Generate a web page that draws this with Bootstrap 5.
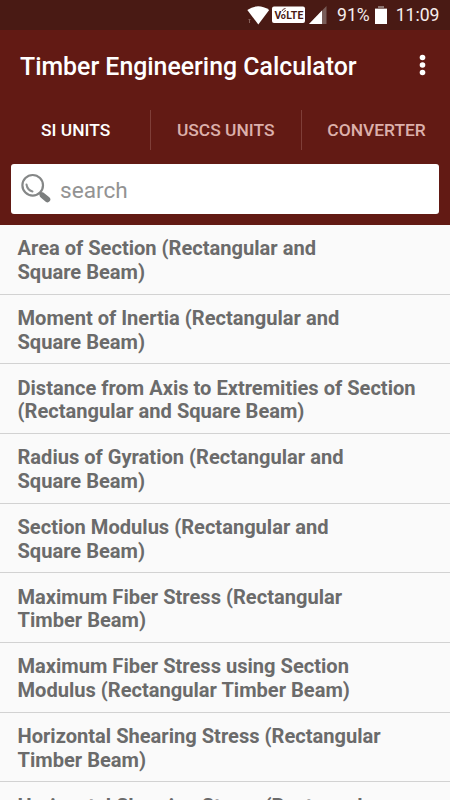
<!DOCTYPE html>
<html lang="en">
<head>
<meta charset="utf-8">
<meta name="viewport" content="width=device-width, initial-scale=1">
<title>Timber Engineering Calculator</title>
<link href="https://cdn.jsdelivr.net/npm/bootstrap@5.3.0/dist/css/bootstrap.min.css" rel="stylesheet">
<style>
body{font-family:Roboto,"Liberation Sans",sans-serif;background:#fafafa}
.screen{height:800px}
.statusbar{height:30px;background:#491a14;padding-right:10.5px;color:#f6eeed;font-size:17.6px;line-height:32px}
.statusbar svg{display:block}
.signals{margin-right:1px}
.battery{margin:0 6px 0 0}
.app-head{height:195px;background:#621a14;color:#fff}
.titlebar{height:72px;padding:0 18px 0 20px}
.titlebar h1{font-size:24.85px;font-weight:500;line-height:30px;white-space:nowrap;padding-top:1px}
.unit-tabs{height:57px;padding:8px 0 9px;margin-right:-2px}
.unit-tabs .nav-link{height:40px;font-size:17.4px;font-weight:500;color:#dcb0ab;padding:1px 1px 0 0;white-space:nowrap;border-radius:0}
.unit-tabs .nav-link.active{color:#fff;padding-left:2px}
.unit-tabs .nav-item+.nav-item{border-left:1px solid #7f3e38}
.searchbox{margin:5px 11px 0;height:50px;background:#fff;border-radius:3px;padding-left:9px}
.searchbox input{font-size:22.6px;color:#888;line-height:30px}
.searchbox .form-control{padding-top:3px!important}
.searchbox input::placeholder{color:#939393;opacity:1}
.formulas{flex:1 1 0;min-height:0}
.formulas .list-group-item{height:69.68px;flex:none;padding:12.3px 17.5px 0;background:#fafafa;color:#6b6b6b;border-color:#d2d2d2;font-size:20.08px;font-weight:700;line-height:23.8px;white-space:nowrap}
</style>
<script src="https://cdn.jsdelivr.net/npm/bootstrap@5.3.0/dist/js/bootstrap.bundle.min.js"></script>
</head>
<body>
<div class="screen d-flex flex-column overflow-hidden">
  <div class="statusbar d-flex align-items-center justify-content-end flex-shrink-0">
    <svg class="signals" width="96" height="30" viewBox="0 0 96 30">
      <path d="M7.300 10Q18 2.500 29.200 10L18.300 24.500Z" fill="#fff"/>
      <path d="M9.500 19v4m-1-3 1-1 1 1" stroke="#84605a" stroke-width="1" fill="none"/>
      <rect x="32" y="6.500" width="33" height="16.500" rx="2" fill="#fff"/>
      <g font-size="10.500" font-weight="700" fill="#491a14"><text x="34.500" y="18.500">V</text><text x="40.800" y="18.800" font-size="9">o</text><text x="46.300" y="18.500" textLength="17">LTE</text></g>
      <path d="M42 11q1-2.500 3.500-2.500M43.500 12.500q1-2 2.500-2" stroke="#491a14" stroke-width=".9" fill="none"/>
      <path d="M86.500 6v18H69Z" fill="#795d59"/>
      <path d="M82 10.500V24H69Z" fill="#fff"/>
    </svg>
    <span>91%</span>
    <svg class="battery" width="20" height="30" viewBox="0 0 20 30"><path d="M8 6.500h6V8h3v16H5V8h3Z" fill="#fff"/><path d="M8 6h6v2h3v1H5V8h3Z" fill="#8b736f"/></svg>
    <span>11:09</span>
  </div>
  <header class="app-head flex-shrink-0">
    <div class="titlebar d-flex align-items-center justify-content-between">
      <h1 class="m-0">Timber Engineering Calculator</h1>
      <svg width="20" height="30" viewBox="0 0 20 30" fill="#fff"><circle cx="10.500" cy="6.500" r="2.800"/><circle cx="10.500" cy="14" r="2.800"/><circle cx="10.500" cy="21.500" r="2.800"/></svg>
    </div>
    <ul class="unit-tabs nav nav-fill flex-nowrap">
      <li class="nav-item w-100"><a class="nav-link active d-flex align-items-center justify-content-center" href="#">SI UNITS</a></li>
      <li class="nav-item w-100"><a class="nav-link d-flex align-items-center justify-content-center" href="#">USCS UNITS</a></li>
      <li class="nav-item w-100"><a class="nav-link d-flex align-items-center justify-content-center" href="#">CONVERTER</a></li>
    </ul>
    <div class="searchbox d-flex align-items-center">
      <svg class="flex-shrink-0" width="36" height="34" viewBox="0 0 36 34" fill="none">
        <circle cx="12.700" cy="13.300" r="10.300" stroke="#858787" stroke-width="2.200"/>
        <path d="M6.500 12.500q.8 5.500 6 7" stroke="#8b8e8e" stroke-width="2" stroke-linecap="round"/>
        <path d="M20 21l3 2.500" stroke="#7b7e7e" stroke-width="3"/>
        <path d="M22.500 23.300l5 4.200" stroke="#7b7e7e" stroke-width="5.600" stroke-linecap="round"/>
      </svg>
      <input class="form-control border-0 shadow-none bg-transparent p-0 ms-1" type="text" placeholder="search" aria-label="search">
    </div>
  </header>
  <div class="formulas list-group list-group-flush overflow-hidden">
    <div class="list-group-item">Area of Section (Rectangular and<br>Square Beam)</div>
    <div class="list-group-item">Moment of Inertia (Rectangular and<br>Square Beam)</div>
    <div class="list-group-item">Distance from Axis to Extremities of Section<br>(Rectangular and Square Beam)</div>
    <div class="list-group-item">Radius of Gyration (Rectangular and<br>Square Beam)</div>
    <div class="list-group-item">Section Modulus (Rectangular and<br>Square Beam)</div>
    <div class="list-group-item">Maximum Fiber Stress (Rectangular<br>Timber Beam)</div>
    <div class="list-group-item">Maximum Fiber Stress using Section<br>Modulus (Rectangular Timber Beam)</div>
    <div class="list-group-item">Horizontal Shearing Stress (Rectangular<br>Timber Beam)</div>
    <div class="list-group-item">Horizontal Shearing Stress (Rectangular<br>Timber Beam)</div>
  </div>
</div>
</body>
</html>
